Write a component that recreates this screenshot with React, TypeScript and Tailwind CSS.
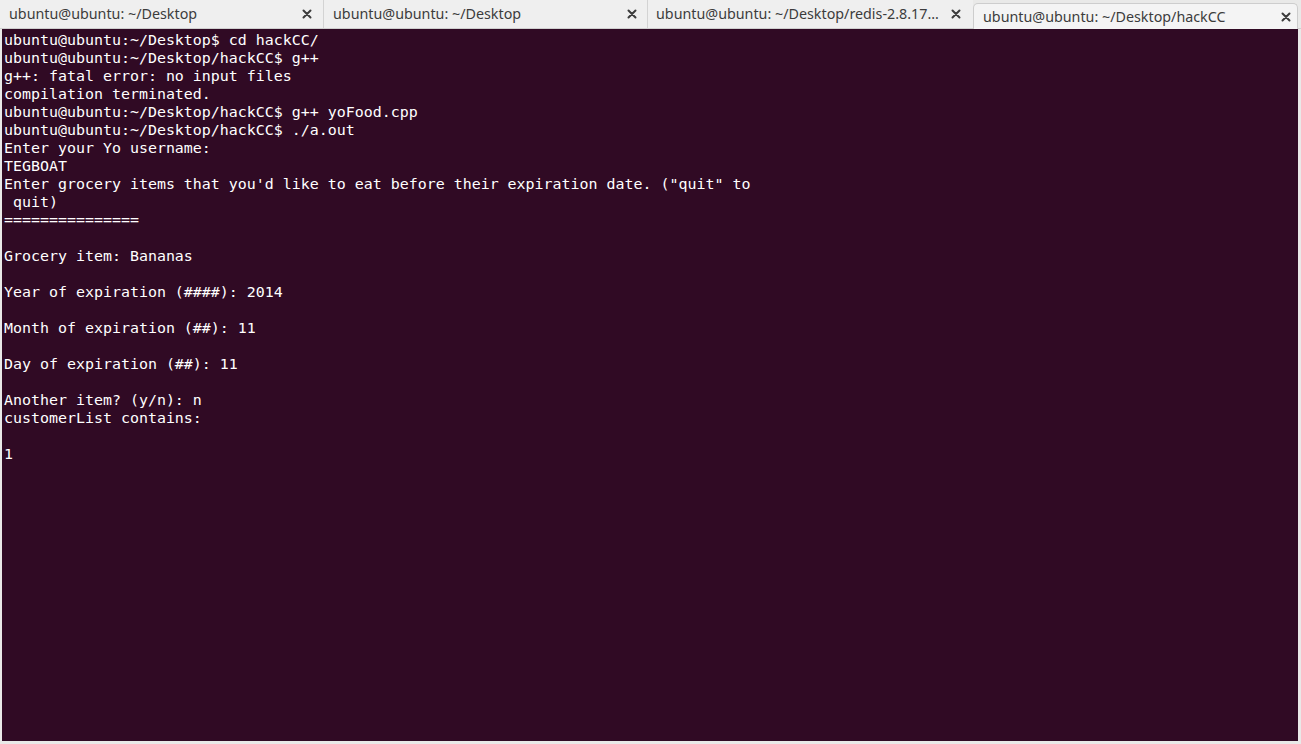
const lines = [
  "ubuntu@ubuntu:~/Desktop$ cd hackCC/",
  "ubuntu@ubuntu:~/Desktop/hackCC$ g++",
  "g++: fatal error: no input files",
  "compilation terminated.",
  "ubuntu@ubuntu:~/Desktop/hackCC$ g++ yoFood.cpp",
  "ubuntu@ubuntu:~/Desktop/hackCC$ ./a.out",
  "Enter your Yo username:",
  "TEGBOAT",
  'Enter grocery items that you\'d like to eat before their expiration date. ("quit" to',
  " quit)",
  "===============",
  "",
  "Grocery item: Bananas",
  "",
  "Year of expiration (####): 2014",
  "",
  "Month of expiration (##): 11",
  "",
  "Day of expiration (##): 11",
  "",
  "Another item? (y/n): n",
  "customerList contains:",
  "",
  "1",
];

function CloseIcon() {
  return (
    <svg width="10" height="10" viewBox="0 0 10 10" className="shrink-0">
      <path d="M1.5 1.5 L8.5 8.5 M8.5 1.5 L1.5 8.5" stroke="#3c3c3c" strokeWidth="2" strokeLinecap="round" />
    </svg>
  );
}

function Tab({ title, className }: { title: string; className: string }) {
  return (
    <div className={`flex items-center justify-between shrink-0 ${className}`}>
      <span className="text-[14.3px] text-[#3c3c3c] font-['Noto_Sans',sans-serif] whitespace-nowrap">{title}</span>
      <CloseIcon />
    </div>
  );
}

export default function App() {
  return (
    <div className="w-[1301px] h-[744px] flex flex-col bg-[#e9e9e8] overflow-hidden">
      <div className="h-[29px] flex shrink-0 border-b border-[#cfcfcf]">
        <Tab title="ubuntu@ubuntu: ~/Desktop" className="w-[324px] pl-[9px] pr-[11px] bg-[#efefef] border-r border-[#d3d3d3]" />
        <Tab title="ubuntu@ubuntu: ~/Desktop" className="w-[324px] pl-[9px] pr-[10px] bg-[#efefef] border-r border-[#d3d3d3]" />
        <Tab title="ubuntu@ubuntu: ~/Desktop/redis-2.8.17…" className="w-[325px] pl-[8px] pr-[12px] bg-[#efefef]" />
        <Tab
          title="ubuntu@ubuntu: ~/Desktop/hackCC"
          className="w-[325px] mt-[3px] -mb-px pl-[9px] pr-[6px] bg-[#f4f4f4] border border-b-0 border-[#cdcdcd] rounded-t-[5px]"
        />
      </div>
      <div className="flex-1 ml-[2px] mr-[3px] mb-[3px] bg-[#300a24] pt-[2px] pl-[2px] font-['DejaVu_Sans_Mono',monospace] text-[14.95px] leading-[18px] text-white">
        {lines.map((l, i) => (
          <div key={i} className="whitespace-pre h-[18px]">
            {l}
          </div>
        ))}
      </div>
    </div>
  );
}
